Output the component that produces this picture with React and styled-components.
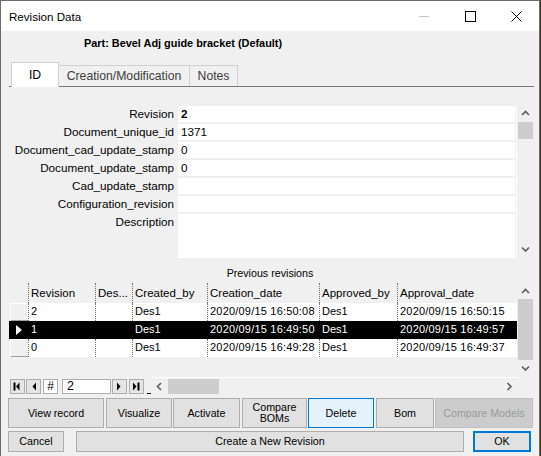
import React from 'react';
import styled, { createGlobalStyle, css } from 'styled-components';

const GlobalStyle = createGlobalStyle`
  html, body { margin: 0; padding: 0; background: #3a3a26; }
  body { font-family: "Liberation Sans", Arial, sans-serif; color: #000; }
  *, *::before, *::after { box-sizing: border-box; }
`;

const Window = styled.div`
  width: 540px;
  height: 456px;
  background: #f0f0f0;
  border: 1px solid #6b6b6b;
  border-bottom: none;
  display: flex;
  flex-direction: column;
  overflow: hidden;
`;

const TitleBar = styled.div`
  height: 30px;
  flex: none;
  background: #fff;
  display: flex;
  align-items: center;
`;

const Title = styled.div`
  flex: 1;
  padding-left: 8px;
  font-size: 11.6px;
`;

const CaptionButton = styled.div`
  width: 46px;
  height: 30px;
  display: flex;
  align-items: center;
  justify-content: center;
`;

const PartRow = styled.div`
  height: 24px;
  flex: none;
  padding-left: 83px;
  display: flex;
  align-items: center;
  font-size: 10.9px;
  font-weight: bold;
`;

const TabControl = styled.div`
  margin: 7px 5px 0 8px;
  flex: none;
`;

const TabStrip = styled.div`
  display: flex;
  align-items: flex-end;
  height: 25px;
  padding-left: 2px;
  border-bottom: 1px solid #7a7a7a;
`;

const Tab = styled.div`
  width: ${p => p.$w}px;
  height: ${p => (p.$active ? 25 : 21)}px;
  margin-bottom: ${p => (p.$active ? -1 : 0)}px;
  margin-left: ${p => (p.$first ? 0 : -1)}px;
  background: ${p => (p.$active ? '#fff' : '#f0f0f0')};
  border: 1px solid #d0d0d0;
  border-bottom: none;
  display: flex;
  align-items: center;
  justify-content: center;
  font-size: 12.2px;
  color: ${p => (p.$active ? '#000' : '#3c3c3c')};
  padding-bottom: ${p => (p.$active ? 1 : 0)}px;
`;

const Panel = styled.div`
  padding-top: 18px;
`;

const FieldsArea = styled.div`
  display: flex;
  height: 153px;
`;

const FieldList = styled.div`
  width: 507px;
  padding-top: 1px;
  display: flex;
  flex-direction: column;
  gap: 2px;
`;

const FieldRow = styled.div`
  display: grid;
  grid-template-columns: 169px 337px;
  height: ${p => p.$h}px;
  flex: none;
`;

const FieldLabel = styled.div`
  text-align: right;
  padding-right: 4px;
  font-size: 11.7px;
  line-height: 16px;
  white-space: nowrap;
`;

const FieldValue = styled.div`
  background: #fff;
  padding-left: 3px;
  font-size: 11.7px;
  line-height: 16px;
  font-weight: ${p => (p.$bold ? 'bold' : 'normal')};
`;

const VScroll = styled.div`
  width: ${p => p.$w}px;
  flex: none;
  display: flex;
  flex-direction: column;
  background: #f0f0f0;
  border-left: ${p => (p.$edge ? '1px solid #fff' : 'none')};
`;

const ArrowBox = styled.div`
  height: ${p => p.$h}px;
  width: ${p => (p.$wide ? `${p.$wide}px` : 'auto')};
  flex: none;
  display: flex;
  align-items: center;
  justify-content: center;
`;

const Track = styled.div`
  flex: 1;
  display: flex;
  flex-direction: ${p => (p.$horizontal ? 'row' : 'column')};
`;

const Thumb = styled.div`
  background: #cdcdcd;
  ${p =>
    p.$horizontal
      ? css`
          width: ${p.$size}px;
          margin: 1px 0;
        `
      : css`
          height: ${p.$size}px;
          margin: 0 1px;
        `}
`;

const Caption = styled.div`
  height: 25px;
  padding-top: 8px;
  font-size: 10.7px;
  line-height: 14px;
  text-align: center;
  flex: none;
`;

const GridFrame = styled.div`
  margin: 0 5px 0 8px;
  height: 94px;
  flex: none;
  display: flex;
  background: #f0f0f0;
`;

const GridMain = styled.div`
  width: 508px;
  display: flex;
  flex-direction: column;
`;

const COLS = '19px 67px 37px 75px 112px 78px 120px';

const GridRow = styled.div`
  display: grid;
  grid-template-columns: ${COLS};
  height: ${p => (p.$header ? 20 : 18)}px;
  flex: none;
  background: ${p => (p.$selected ? '#000' : 'transparent')};
  color: ${p => (p.$selected ? '#fff' : '#000')};
`;

const Cell = styled.div`
  border-left: 1px dotted ${p => (p.$selected ? '#000' : '#707070')};
  padding-left: 2px;
  white-space: nowrap;
  overflow: hidden;
  background: ${p => (p.$header || p.$selected ? 'transparent' : '#fff')};
  ${p =>
    p.$header
      ? css`
          font-size: 11.5px;
          line-height: 20px;
        `
      : css`
          font-size: 11px;
          line-height: 17px;
          letter-spacing: ${p.$wide ? '0.2px' : '0'};
        `}
`;

const Indicator = styled.div`
  display: flex;
  align-items: center;
  ${p =>
    p.$kind === 'row' &&
    css`
      margin-left: 1px;
      background: #f0f0f0;
      border-top: 1px solid #fff;
      border-left: 1px solid #fff;
      border-bottom: 1px solid #a0a0a0;
    `}
  ${p =>
    p.$kind === 'selected' &&
    css`
      padding-left: 7px;
    `}
`;

const NavRow = styled.div`
  margin: 0 5px 0 8px;
  height: 18px;
  flex: none;
  display: flex;
  padding-left: 1px;
`;

const NavButton = styled.div`
  width: ${p => p.$w || 15}px;
  height: 15px;
  margin-top: 2px;
  margin-left: ${p => p.$ml || 0}px;
  flex: none;
  background: ${p => (p.$white ? '#fff' : '#e5e5e5')};
  border: 1px solid #adadad;
  display: flex;
  align-items: center;
  justify-content: center;
  font-size: 12px;
  line-height: 13px;
`;

const NavInput = styled.div`
  width: 49px;
  height: 15px;
  margin-top: 2px;
  margin-left: 4px;
  flex: none;
  background: #fff;
  border: 1px solid #adadad;
  font-size: 12.5px;
  line-height: 13px;
  padding-left: 4px;
`;

const Caret = styled.div`
  width: 4px;
  height: 1px;
  background: #000;
  margin: 16px 0 0 3px;
  flex: none;
`;

const HScroll = styled.div`
  width: 367px;
  height: 18px;
  flex: none;
  border-top: 1px solid #fff;
  display: flex;
  background: #f0f0f0;
`;

const ButtonRow = styled.div`
  display: flex;
  flex: none;
  height: ${p => p.$h}px;
  margin: 3px 0 0 7px;
`;

const Button = styled.button`
  width: ${p => p.$w}px;
  height: 100%;
  margin-left: ${p => p.$ml || 0}px;
  flex: none;
  padding: 0;
  font-family: "Liberation Sans", Arial, sans-serif;
  font-size: 10.7px;
  line-height: 11px;
  color: #000;
  background: #e1e1e1;
  border: 1px solid #adadad;
  ${p =>
    p.$variant === 'hover' &&
    css`
      background: #e5f1fb;
      border-color: #0078d7;
    `}
  ${p =>
    p.$variant === 'default' &&
    css`
      border: 2px solid #0078d7;
    `}
  ${p =>
    p.$variant === 'disabled' &&
    css`
      background: #cccccc;
      border-color: #bfbfbf;
      color: #9a9a9a;
    `}
`;

const Chevron = ({ dir }) => {
  const pts = {
    up: '1,5 4.5,1.5 8,5',
    down: '1,1.5 4.5,5 8,1.5',
    left: '5,1 1.5,4.5 5,8',
    right: '1.5,1 5,4.5 1.5,8',
  }[dir];
  const horizontal = dir === 'left' || dir === 'right';
  return (
    <svg width={horizontal ? 7 : 9} height={horizontal ? 9 : 7} viewBox={horizontal ? '0 0 7 9' : '0 0 9 7'}>
      <polyline points={pts} fill="none" stroke="#606060" strokeWidth="1.7" />
    </svg>
  );
};

const NavGlyph = ({ kind }) => (
  <svg width="13" height="13" viewBox="0 0 13 13">
    {kind === 'first' && (
      <>
        <rect x="2.5" y="2.5" width="2" height="8" fill="#000" />
        <polygon points="5,6.5 8.5,2.5 8.5,10.5" fill="#000" />
      </>
    )}
    {kind === 'prev' && <polygon points="5.5,6.5 9,2.5 9,10.5" fill="#000" />}
    {kind === 'next' && <polygon points="4,2.5 4,10.5 7.5,6.5" fill="#000" />}
    {kind === 'last' && (
      <>
        <polygon points="3,2.5 3,10.5 6.5,6.5" fill="#000" />
        <rect x="7.5" y="2.5" width="2" height="8" fill="#000" />
      </>
    )}
  </svg>
);

const fields = [
  { label: 'Revision', value: '2', bold: true },
  { label: 'Document_unique_id', value: '1371' },
  { label: 'Document_cad_update_stamp', value: '0' },
  { label: 'Document_update_stamp', value: '0' },
  { label: 'Cad_update_stamp', value: '' },
  { label: 'Configuration_revision', value: '' },
  { label: 'Description', value: '', h: 44 },
];

const headers = ['Revision', 'Des...', 'Created_by', 'Creation_date', 'Approved_by', 'Approval_date'];

const rows = [
  ['2', '', 'Des1', '2020/09/15 16:50:08', 'Des1', '2020/09/15 16:50:15'],
  ['1', '', 'Des1', '2020/09/15 16:49:50', 'Des1', '2020/09/15 16:49:57'],
  ['0', '', 'Des1', '2020/09/15 16:49:28', 'Des1', '2020/09/15 16:49:37'],
];

const SELECTED = 1;

export default function App() {
  return (
    <>
      <GlobalStyle />
      <Window>
        <TitleBar>
          <Title>Revision Data</Title>
          <CaptionButton>
            <svg width="10" height="10" viewBox="0 0 10 10">
              <line x1="0" y1="5.5" x2="10" y2="5.5" stroke="#c8c8c8" strokeWidth="1" />
            </svg>
          </CaptionButton>
          <CaptionButton>
            <svg width="11" height="11" viewBox="0 0 11 11">
              <rect x="0.5" y="0.5" width="10" height="10" fill="none" stroke="#000" strokeWidth="1" />
            </svg>
          </CaptionButton>
          <CaptionButton>
            <svg width="11" height="11" viewBox="0 0 11 11">
              <path d="M0.5 0.5 L10.5 10.5 M10.5 0.5 L0.5 10.5" stroke="#000" strokeWidth="1" />
            </svg>
          </CaptionButton>
        </TitleBar>

        <PartRow>Part: Bevel Adj guide bracket (Default)</PartRow>

        <TabControl>
          <TabStrip>
            <Tab $active $first $w={48}>ID</Tab>
            <Tab $w={132}>Creation/Modification</Tab>
            <Tab $w={49}>Notes</Tab>
          </TabStrip>
          <Panel>
            <FieldsArea>
              <FieldList>
                {fields.map(f => (
                  <FieldRow key={f.label} $h={f.h || 16}>
                    <FieldLabel>{f.label}</FieldLabel>
                    <FieldValue $bold={f.bold}>{f.value}</FieldValue>
                  </FieldRow>
                ))}
              </FieldList>
              <VScroll $w={18} $edge>
                <ArrowBox $h={17}><Chevron dir="up" /></ArrowBox>
                <Track>
                  <Thumb $size={17} />
                </Track>
                <ArrowBox $h={17}><Chevron dir="down" /></ArrowBox>
              </VScroll>
            </FieldsArea>
          </Panel>
        </TabControl>

        <Caption>Previous revisions</Caption>

        <GridFrame>
          <GridMain>
            <GridRow $header>
              <Indicator />
              {headers.map(h => (
                <Cell key={h} $header>{h}</Cell>
              ))}
            </GridRow>
            {rows.map((r, i) => {
              const sel = i === SELECTED;
              return (
                <GridRow key={i} $selected={sel}>
                  {sel ? (
                    <Indicator $kind="selected">
                      <svg width="7" height="10" viewBox="0 0 7 10">
                        <polygon points="0,0 6,5 0,10" fill="#fff" />
                      </svg>
                    </Indicator>
                  ) : (
                    <Indicator $kind="row" />
                  )}
                  {r.map((c, j) => (
                    <Cell key={j} $selected={sel} $wide={c.length > 10}>{c}</Cell>
                  ))}
                </GridRow>
              );
            })}
          </GridMain>
          <VScroll $w={17}>
            <ArrowBox $h={16}><Chevron dir="up" /></ArrowBox>
            <Track>
              <Thumb $size={61} />
            </Track>
            <ArrowBox $h={17}><Chevron dir="down" /></ArrowBox>
          </VScroll>
        </GridFrame>

        <NavRow>
          <NavButton><NavGlyph kind="first" /></NavButton>
          <NavButton $ml={1}><NavGlyph kind="prev" /></NavButton>
          <NavButton $ml={2} $white>#</NavButton>
          <NavInput>2</NavInput>
          <NavButton $ml={1}><NavGlyph kind="next" /></NavButton>
          <NavButton $ml={2}><NavGlyph kind="last" /></NavButton>
          <Caret />
          <HScroll>
            <ArrowBox $h={17} $wide={17}><Chevron dir="left" /></ArrowBox>
            <Track $horizontal>
              <Thumb $horizontal $size={51} />
            </Track>
            <ArrowBox $h={17} $wide={17}><Chevron dir="right" /></ArrowBox>
          </HScroll>
        </NavRow>

        <ButtonRow $h={30}>
          <Button $w={96}>View record</Button>
          <Button $w={66} $ml={2}>Visualize</Button>
          <Button $w={67} $ml={1}>Activate</Button>
          <Button $w={65} $ml={2}>Compare<br />BOMs</Button>
          <Button $w={66} $ml={1} $variant="hover">Delete</Button>
          <Button $w={58} $ml={2}>Bom</Button>
          <Button $w={98} $ml={1} $variant="disabled">Compare Models</Button>
        </ButtonRow>

        <ButtonRow $h={21}>
          <Button $w={56}>Cancel</Button>
          <Button $w={388} $ml={12}>Create a New Revision</Button>
          <Button $w={58} $ml={9} $variant="default">OK</Button>
        </ButtonRow>
      </Window>
    </>
  );
}
